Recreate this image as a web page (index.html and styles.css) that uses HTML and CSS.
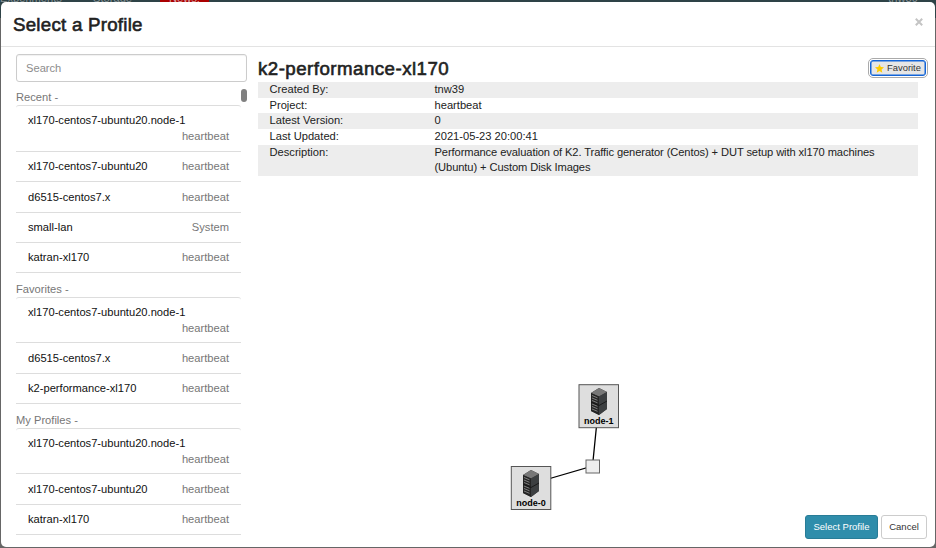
FILE: index.html
```
<!DOCTYPE html>
<html lang="en">
<head>
<meta charset="utf-8">
<title>Select a Profile</title>
<link rel="stylesheet" href="styles.css">
</head>
<body>
<nav class="navbar"><span class="nav-exp">Experiments</span><span class="nav-sto">Storage</span><span class="nav-new">News!</span><span class="nav-user">tnw39</span></nav>
<div class="modal">
  <header class="modal-header">
    <h1>Select a Profile</h1>
    <button class="close" aria-label="Close"><svg width="8" height="8" viewBox="0 0 8 8"><path d="M.8 .8 7.2 7.2M7.2 .8 .8 7.2" stroke="#c4c4c4" stroke-width="2"/></svg></button>
  </header>
  <main class="modal-body">
    <aside class="picker">
      <input class="search" type="text" placeholder="Search">
      <div class="scroll">
        <div class="groups">
          <h2>Recent -</h2>
          <ul>
            <li class="tall"><span>xl170-centos7-ubuntu20.node-1</span><em>heartbeat</em></li>
            <li><span>xl170-centos7-ubuntu20</span><em>heartbeat</em></li>
            <li><span>d6515-centos7.x</span><em>heartbeat</em></li>
            <li><span>small-lan</span><em>System</em></li>
            <li><span>katran-xl170</span><em>heartbeat</em></li>
          </ul>
          <h2>Favorites -</h2>
          <ul>
            <li class="tall"><span>xl170-centos7-ubuntu20.node-1</span><em>heartbeat</em></li>
            <li><span>d6515-centos7.x</span><em>heartbeat</em></li>
            <li><span>k2-performance-xl170</span><em>heartbeat</em></li>
          </ul>
          <h2>My Profiles -</h2>
          <ul>
            <li class="tall"><span>xl170-centos7-ubuntu20.node-1</span><em>heartbeat</em></li>
            <li><span>xl170-centos7-ubuntu20</span><em>heartbeat</em></li>
            <li><span>katran-xl170</span><em>heartbeat</em></li>
          </ul>
        </div>
        <div class="thumb"></div>
      </div>
    </aside>
    <section class="detail">
      <div class="detail-head">
        <h2>k2-performance-xl170</h2>
        <button class="favorite"><svg width="9" height="9" viewBox="0 0 20 20"><path fill="#fc0" d="M10 0l2.900 6.700 7.100.700-5.400 4.800L16.200 19.500 10 15.700 3.800 19.500 5.400 12.200 0 7.400l7.100-.700z"/></svg><span>Favorite</span></button>
      </div>
      <dl class="info">
        <div><dt>Created By:</dt><dd>tnw39</dd></div>
        <div><dt>Project:</dt><dd>heartbeat</dd></div>
        <div><dt>Latest Version:</dt><dd>0</dd></div>
        <div><dt>Last Updated:</dt><dd>2021-05-23 20:00:41</dd></div>
        <div><dt>Description:</dt><dd class="long">Performance evaluation of K2. Traffic generator (Centos) + DUT setup with xl170 machines<br>(Ubuntu) + Custom Disk Images</dd></div>
      </dl>
      <svg class="topology" width="660" height="334" viewBox="258 176 660 334">
        <defs>
          <g id="server">
            <path d="M0 5 8 0 16 4V21L8 27 0 23z" fill="#333"/>
            <path d="M0 5 8 0 16 4 8 8.500z" fill="#777"/>
            <path d="M8 8.500 16 4V21L8 27z" fill="#3c3f41"/>
            <path d="M0 5 8 8.500V27L0 23z" fill="#242424"/>
            <path d="M1 7.500l5.500 2.300M1 10l5.500 2.300M1 12.500l5.500 2.300M1 16l5.500 2.300M1 18.500l5.500 2.300M1 21l5.500 2.300" stroke="#888" stroke-width=".9"/>
            <path d="M0 14 8 17.500 16 13" fill="none" stroke="#151515" stroke-width=".9"/>
          </g>
        </defs>
        <path d="M598.500 406 592.500 466 531 484" fill="none" stroke="#000" stroke-width="1.300"/>
        <rect x="586" y="460" width="13.500" height="13" fill="#eee" stroke="#666"/>
        <rect x="579" y="384.700" width="39.500" height="43" fill="#dedede" stroke="#555"/>
        <rect x="511.300" y="466.500" width="39.500" height="43" fill="#dedede" stroke="#555"/>
        <use href="#server" x="591" y="388"/>
        <use href="#server" x="523" y="470"/>
        <text x="598.700" y="424.300">node-1</text>
        <text x="531" y="506.300">node-0</text>
      </svg>
      <footer class="actions">
        <button class="btn primary">Select Profile</button>
        <button class="btn">Cancel</button>
      </footer>
    </section>
  </main>
</div>
</body>
</html>
```
FILE: styles.css
```
* { box-sizing: border-box; }
body {
  margin: 0;
  width: 936px;
  height: 548px;
  overflow: hidden;
  position: relative;
  background: linear-gradient(#2e4347 0 18px, #666 18px);
  font-family: "Liberation Sans", Arial, sans-serif;
  font-size: 11.15px;
  line-height: 15.6px;
  color: #222;
}
h1, h2, ul, dl, dd { margin: 0; padding: 0; }
button, input { font: inherit; margin: 0; }

.navbar {
  position: absolute;
  inset: 0 0 auto 0;
  height: 18px;
  color: #899497;
  display: flex;
  line-height: 14px;
}
.navbar span { margin-top: -9px; height: 18px; }
.nav-exp { width: 93px; }
.nav-sto { width: 67px; }
.navbar .nav-new { width: 49px; height: 12px; text-align: center; background: #a00; color: #d8a0a0; }
.nav-user { margin: 0 18px 0 auto; }

.modal {
  position: relative;
  margin: 2px 1px 0;
  height: 545px;
  background: #fff;
  border-radius: 5px;
}
.modal-header {
  height: 45px;
  padding: 2px 12px 0 12px;
  border-bottom: 1px solid #e3e3e3;
  display: flex;
  justify-content: space-between;
  align-items: center;
}
.modal-header h1, .detail-head h2 {
  font-size: 18.7px;
  font-weight: 400;
  line-height: 22px;
  -webkit-text-stroke: .6px #222;
}
.modal-header h1 { letter-spacing: .25px; }
.detail-head h2 { letter-spacing: .47px; margin-top: 1px; }
.close { border: 0; padding: 0; background: none; display: flex; margin-top: -6px; }

.modal-body { display: flex; height: 500px; }
.picker { width: 257px; padding: 7px 0 0 15px; }
.search {
  display: block;
  width: 231px;
  height: 28px;
  padding: 0 9px;
  border: 1px solid #ccc;
  border-radius: 3px;
  color: #555;
  box-shadow: inset 0 1px 1px rgba(0, 0, 0, .06);
}
.search::placeholder { color: #8d8d8d; opacity: 1; }

.scroll { display: flex; padding-top: 7px; }
.groups { width: 225px; }
.groups h2 {
  font-size: 11.15px;
  font-weight: 400;
  color: #777;
  height: 16px;
  padding-top: 1px;
}
.groups ul {
  list-style: none;
  border: solid #ddd;
  border-width: 1px 0 0;
  border-radius: 3px;
  margin-bottom: 7.300px;
}
.groups li {
  display: flex;
  justify-content: space-between;
  height: 30.400px;
  padding: 7.500px 12px 0;
  border-bottom: 1px solid #ddd;
  color: #111;
}
.groups li.tall { display: block; height: 45.800px; padding-top: 7.200px; line-height: 15.800px; }
.groups em { font-style: normal; color: #777; }
.groups .tall em { display: block; text-align: right; }
.thumb { width: 6px; height: 13px; border-radius: 3px; background: #808080; }

.detail { width: 670px; display: flex; flex-direction: column; padding-top: 10px; }
.detail-head { display: flex; justify-content: space-between; height: 25.300px; }
.favorite {
  width: 56px;
  height: 16px;
  margin: 3px 2px 0 0;
  padding: 0;
  display: flex;
  align-items: center;
  justify-content: center;
  gap: 3px;
  font-size: 9.400px;
  line-height: 14px;
  color: #333;
  background: #e6e6e6;
  border: 1.500px solid #1264d8;
  border-radius: 3px;
  outline: 1px solid #aaa;
  outline-offset: 1px;
  box-shadow: inset 0 0 0 .5px #1264d8;
}
.info { width: 660px; }
.info > div { display: flex; padding-left: 11.500px; }
.info > div:nth-child(odd) { background: #ededed; }
.info dt { width: 165px; }
.info .long { letter-spacing: -.1px; }
.topology { display: block; flex: none; }
.topology text { font-size: 9px; font-weight: 700; text-anchor: middle; fill: #000; }
.actions { display: flex; gap: 3px; margin-top: 5px; justify-content: flex-end; padding-right: 1px; }
.btn {
  height: 24px;
  width: 46px;
  padding: 0;
  font-size: 9.500px;
  color: #333;
  background: #fff;
  border: 1px solid #ccc;
  border-radius: 3px;
}
.btn.primary { width: 73px; color: #fff; background: #2f8dab; border-color: #287c97; }
```
